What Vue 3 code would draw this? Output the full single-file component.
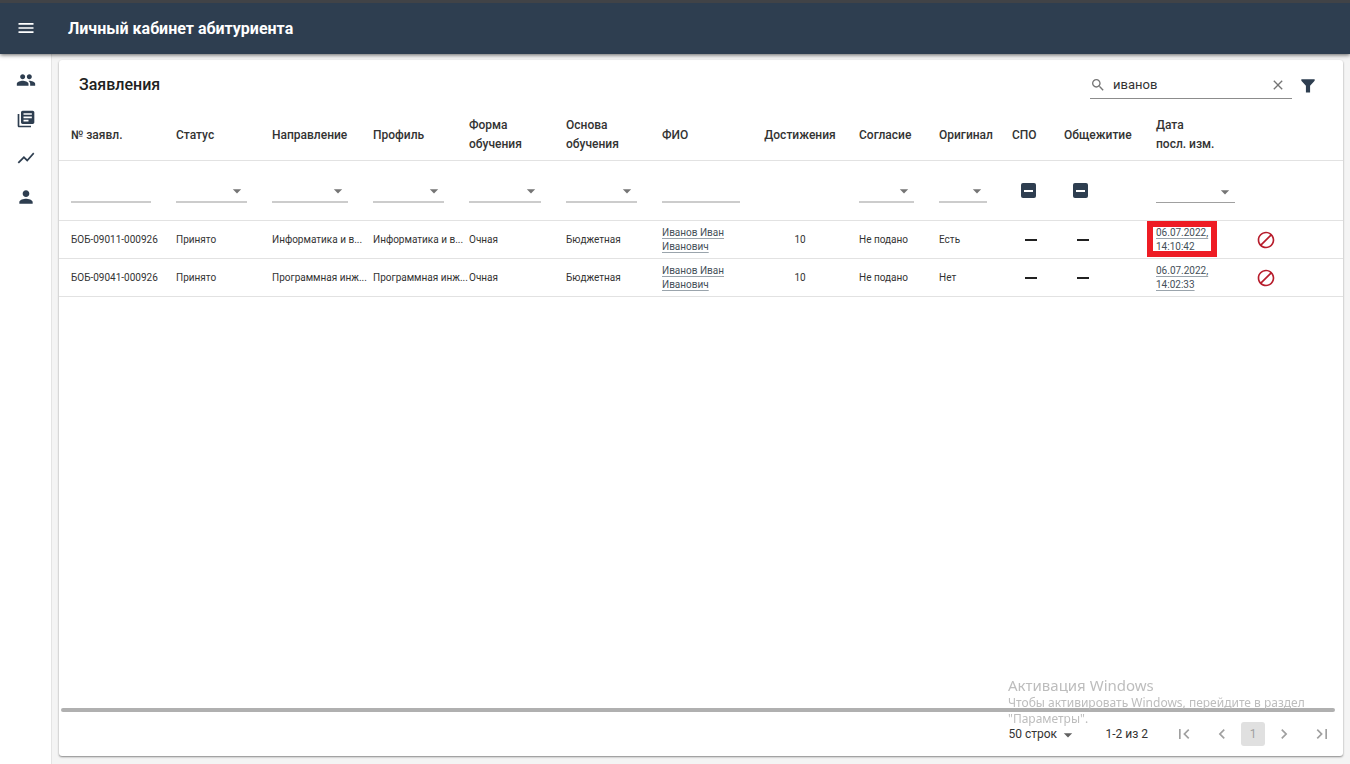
<script setup>
import { ref } from 'vue'

const search = ref('иванов')
const rowsPerPage = ref('50 строк')

const nav = [
  { label: 'Абитуриенты', path: 'M16 11c1.66 0 2.99-1.34 2.99-3S17.66 5 16 5s-3 1.34-3 3 1.34 3 3 3zm-8 0c1.66 0 2.99-1.34 2.99-3S9.66 5 8 5 5 6.34 5 8s1.34 3 3 3zm0 2c-2.33 0-7 1.17-7 3.5V19h14v-2.500c0-2.330-4.670-3.500-7-3.500zm8 0c-.29 0-.62.02-.97.05 1.160.84 1.970 1.970 1.970 3.450V19h6v-2.500c0-2.330-4.670-3.500-7-3.500z' },
  { label: 'Заявления', path: 'M4 6H2v14c0 1.100.9 2 2 2h14v-2H4V6zm16-4H8c-1.100 0-2 .9-2 2v12c0 1.100.9 2 2 2h12c1.100 0 2-.9 2-2V4c0-1.100-.9-2-2-2zm-1 9H9V9h10v2zm-4 4H9v-2h6v2zm4-8H9V5h10v2z' },
  { label: 'Статистика', path: 'M3.500 18.490l6-6.010 4 4L22 6.920l-1.410-1.410-7.090 7.970-4-4L2 16.990z' },
  { label: 'Профиль', path: 'M12 12c2.210 0 4-1.790 4-4s-1.790-4-4-4-4 1.790-4 4 1.790 4 4 4zm0 2c-2.670 0-8 1.340-8 4v2h16v-2c0-2.660-5.330-4-8-4z' },
]

const columns = [
  { key: 'number', lines: ['№ заявл.'], filter: 'text' },
  { key: 'status', lines: ['Статус'], filter: 'select' },
  { key: 'direction', lines: ['Направление'], filter: 'select' },
  { key: 'profile', lines: ['Профиль'], filter: 'select' },
  { key: 'form', lines: ['Форма', 'обучения'], filter: 'select' },
  { key: 'basis', lines: ['Основа', 'обучения'], filter: 'select' },
  { key: 'name', lines: ['ФИО'], filter: 'text' },
  { key: 'points', lines: ['Достижения'] },
  { key: 'consent', lines: ['Согласие'], filter: 'select' },
  { key: 'original', lines: ['Оригинал'], filter: 'select' },
  { key: 'spo', lines: ['СПО'], filter: 'check' },
  { key: 'dorm', lines: ['Общежитие'], filter: 'check' },
  { key: 'date', lines: ['Дата', 'посл. изм.'], filter: 'select' },
  { key: 'action', lines: [] },
]

const rows = [
  { number: 'БОБ-09011-000926', status: 'Принято', direction: 'Информатика и в...', profile: 'Информатика и в...', form: 'Очная', basis: 'Бюджетная', name: ['Иванов Иван', 'Иванович'], points: '10', consent: 'Не подано', original: 'Есть', date: ['06.07.2022,', '14:10:42'], marked: true },
  { number: 'БОБ-09041-000926', status: 'Принято', direction: 'Программная инж...', profile: 'Программная инж...', form: 'Очная', basis: 'Бюджетная', name: ['Иванов Иван', 'Иванович'], points: '10', consent: 'Не подано', original: 'Нет', date: ['06.07.2022,', '14:02:33'], marked: false },
]
</script>

<template>
  <div class="app">
    <header class="topbar">
      <button class="icon-btn menu" aria-label="Меню">
        <svg viewBox="0 0 24 24"><path d="M3 18h18v-2H3v2zm0-5h18v-2H3v2zm0-7v2h18V6H3z" /></svg>
      </button>
      <h1>Личный кабинет абитуриента</h1>
    </header>

    <div class="body">
      <nav class="sidebar">
        <a v-for="item in nav" :key="item.label" href="#" :aria-label="item.label">
          <svg viewBox="0 0 24 24"><path :d="item.path" /></svg>
        </a>
      </nav>

      <main class="content">
        <section class="card">
          <div class="toolbar">
            <h2>Заявления</h2>
            <div class="search">
              <svg viewBox="0 0 24 24"><path d="M15.500 14h-.79l-.28-.27C15.410 12.590 16 11.110 16 9.500 16 5.910 13.090 3 9.500 3S3 5.910 3 9.500 5.910 16 9.500 16c1.610 0 3.090-.59 4.230-1.570l.27.28v.79l5 4.990L20.490 19l-4.990-5zm-6 0C7.010 14 5 11.990 5 9.500S7.010 5 9.500 5 14 7.010 14 9.500 11.990 14 9.500 14z" /></svg>
              <input v-model="search" type="text" aria-label="Поиск" />
              <button class="icon-btn" aria-label="Очистить" @click="search = ''">
                <svg viewBox="0 0 24 24"><path d="M19 6.410L17.590 5 12 10.590 6.410 5 5 6.410 10.590 12 5 17.590 6.410 19 12 13.410 17.590 19 19 17.590 13.410 12z" /></svg>
              </button>
            </div>
            <button class="icon-btn funnel" aria-label="Фильтр">
              <svg viewBox="0 0 24 24"><path d="M4 5h16v2l-5.500 6V21h-5v-8L4 7z" /></svg>
            </button>
          </div>

          <div class="table-wrap">
            <table>
              <colgroup>
                <col v-for="c in columns" :key="c.key" :class="'w-' + c.key" />
              </colgroup>
              <thead>
                <tr class="heads">
                  <th v-for="c in columns" :key="c.key" :class="c.key">
                    <div v-for="line in c.lines" :key="line">{{ line }}</div>
                  </th>
                </tr>
                <tr class="filters">
                  <td v-for="c in columns" :key="c.key" :class="c.key">
                    <input v-if="c.filter === 'text'" class="field" type="text" :aria-label="c.lines.join(' ')" />
                    <div v-else-if="c.filter === 'select'" class="field pick">
                      <select :aria-label="c.lines.join(' ')"><option></option></select>
                      <svg viewBox="0 0 24 24"><path d="M7 10l5 5 5-5z" /></svg>
                    </div>
                    <input v-else-if="c.filter === 'check'" class="check" type="checkbox" :indeterminate="true" :aria-label="c.lines.join(' ')" />
                  </td>
                </tr>
              </thead>
              <tbody>
                <tr v-for="r in rows" :key="r.number">
                  <td>{{ r.number }}</td>
                  <td>{{ r.status }}</td>
                  <td>{{ r.direction }}</td>
                  <td>{{ r.profile }}</td>
                  <td>{{ r.form }}</td>
                  <td>{{ r.basis }}</td>
                  <td><a href="#" class="link">{{ r.name[0] }}<br />{{ r.name[1] }}</a></td>
                  <td class="points">{{ r.points }}</td>
                  <td>{{ r.consent }}</td>
                  <td>{{ r.original }}</td>
                  <td class="none"><i></i></td>
                  <td class="none"><i></i></td>
                  <td class="date">
                    <a href="#" class="link">{{ r.date[0] }}<br />{{ r.date[1] }}</a>
                    <span v-if="r.marked" class="mark"></span>
                  </td>
                  <td class="action">
                    <button class="icon-btn" aria-label="Отклонить">
                      <svg viewBox="0 0 24 24"><path d="M12 2C6.480 2 2 6.480 2 12s4.480 10 10 10 10-4.480 10-10S17.520 2 12 2zM4 12c0-4.420 3.580-8 8-8 1.850 0 3.550.63 4.900 1.690L5.690 16.900C4.630 15.550 4 13.850 4 12zm8 8c-1.850 0-3.550-.63-4.900-1.690L18.310 7.100C19.370 8.450 20 10.150 20 12c0 4.420-3.580 8-8 8z" /></svg>
                    </button>
                  </td>
                </tr>
              </tbody>
            </table>
          </div>

          <div class="scrollbar"></div>

          <footer class="pager">
            <div class="pick size">
              <select v-model="rowsPerPage" aria-label="Строк на странице"><option>50 строк</option></select>
              <svg viewBox="0 0 24 24"><path d="M7 10l5 5 5-5z" /></svg>
            </div>
            <span class="range">1-2 из 2</span>
            <div class="pages">
              <button class="icon-btn first" aria-label="Первая"><svg viewBox="0 0 24 24"><path d="M18.410 16.590L13.820 12l4.590-4.590L17 6l-6 6 6 6zM6 6h2v12H6z" /></svg></button>
              <button class="icon-btn" aria-label="Назад"><svg viewBox="0 0 24 24"><path d="M15.410 7.410L14 6l-6 6 6 6 1.410-1.410L10.830 12z" /></svg></button>
              <button class="page">1</button>
              <button class="icon-btn" aria-label="Вперёд"><svg viewBox="0 0 24 24"><path d="M10 6L8.590 7.410 13.170 12l-4.580 4.590L10 18l6-6z" /></svg></button>
              <button class="icon-btn last" aria-label="Последняя"><svg viewBox="0 0 24 24"><path d="M5.590 7.410L10.180 12l-4.590 4.590L7 18l6-6-6-6zM16 6h2v12h-2z" /></svg></button>
            </div>
          </footer>
        </section>
      </main>
    </div>

    <aside class="activation">
      <strong>Активация Windows</strong>
      <p>Чтобы активировать Windows, перейдите в раздел "Параметры".</p>
    </aside>
  </div>
</template>

<style>
body {
  margin: 0;
  background: #f4f4f4;
}
</style>

<style scoped>
* {
  box-sizing: border-box;
}

.app {
  display: flex;
  flex-direction: column;
  min-height: 100vh;
  background: #f4f4f4;
  color: #212121;
  font-family: Roboto, "Liberation Sans", sans-serif;
}

svg {
  display: block;
  width: 20px;
  height: 20px;
  fill: currentColor;
}

button,
input,
select {
  margin: 0;
  padding: 0;
  border: 0;
  outline: 0;
  background: none;
  color: inherit;
  font: inherit;
  appearance: none;
}

.icon-btn {
  display: flex;
  flex: none;
  align-items: center;
  justify-content: center;
}

.topbar {
  position: relative;
  z-index: 2;
  display: flex;
  align-items: center;
  gap: 32px;
  height: 54px;
  padding: 0 16px 1px;
  border-top: 3px solid #414347;
  background: #2e3e50;
  color: #fff;
  box-shadow: 0 1px 4px rgba(0, 0, 0, 0.6);
}

.topbar h1 {
  margin: 0;
  font-size: 16px;
  font-weight: 700;
}

.body {
  display: flex;
  flex: 1;
}

.sidebar {
  display: flex;
  flex: none;
  flex-direction: column;
  gap: 19px;
  width: 52px;
  padding: 16px;
  border-right: 1px solid #e4e4e4;
  background: #fff;
}

.sidebar a {
  color: #2e3e50;
}

.content {
  display: flex;
  flex: 1;
  min-width: 0;
  padding: 6px 7px 8px;
}

.card {
  display: flex;
  flex: 1;
  flex-direction: column;
  min-width: 0;
  border-radius: 3px;
  background: #fff;
  box-shadow: 0 1px 2px rgba(0, 0, 0, 0.45);
}

.toolbar {
  display: flex;
  align-items: center;
  height: 50px;
  padding: 0 25px 0 20px;
}

.toolbar h2 {
  flex: 1;
  margin: 0;
  font-size: 16px;
  font-weight: 500;
  line-height: 20px;
}

.search {
  display: flex;
  align-items: center;
  width: 202px;
  height: 28px;
  border-bottom: 1px solid #8c8c8c;
  color: #757575;
}

.search svg {
  width: 16px;
  height: 16px;
}

.search input {
  flex: 1;
  min-width: 0;
  margin-left: 7px;
  color: #333;
  font-size: 13px;
}

.search .icon-btn {
  margin-right: 6px;
}

.funnel {
  margin-left: 6px;
  color: #2e3e50;
}

.table-wrap {
  flex: 1;
  overflow: hidden;
}

table {
  width: 100%;
  border-spacing: 0;
  table-layout: fixed;
}

.w-number { width: 105px; }
.w-status { width: 96px; }
.w-direction { width: 101px; }
.w-profile { width: 96px; }
.w-form { width: 97px; }
.w-basis { width: 96px; }
.w-name { width: 103px; }
.w-points { width: 94px; }
.w-consent { width: 80px; }
.w-original { width: 73px; }
.w-spo { width: 52px; }
.w-dorm { width: 92px; }
.w-date { width: 104px; }
.w-action { width: 95px; }

th,
td {
  padding: 0 0 0 12px;
  border-bottom: 1px solid #e2e2e2;
  text-align: left;
  vertical-align: middle;
  white-space: nowrap;
}

th {
  height: 51px;
  color: #333;
  font-size: 12px;
  font-weight: 500;
  line-height: 19px;
}

th.points,
td.points {
  padding: 0;
  text-align: center;
}

.filters td {
  height: 60px;
  padding-right: 13px;
}

tbody td {
  height: 38px;
  color: #333;
  font-size: 10px;
  line-height: 14px;
}

.field {
  display: block;
  width: 100%;
  height: 25px;
  border-bottom: 2px solid #ccc;
}

.date .field {
  height: 24px;
  border-bottom: 1px solid #a0a0a0;
}

.pick {
  display: flex;
  position: relative;
  color: #757575;
}

.pick select {
  width: 100%;
}

.pick svg {
  position: absolute;
  right: 0;
  bottom: 0;
  pointer-events: none;
}

.filters .spo,
.filters .dorm {
  padding: 0 0 0 21px;
}

.check {
  display: grid;
  place-items: center;
  width: 15px;
  height: 15px;
  border-radius: 2px;
  background: #2e3e50;
}

.check::after {
  content: "";
  width: 9px;
  height: 2px;
  background: #fff;
}

.link {
  color: #455059;
  text-decoration: underline;
  text-decoration-color: #9aa4ac;
  text-underline-offset: 2px;
}

.none {
  padding-left: 25px;
}

.none i {
  display: block;
  width: 12px;
  height: 2px;
  background: #212121;
}

td.date {
  position: relative;
}

.mark {
  position: absolute;
  top: 0;
  left: 3px;
  width: 70px;
  height: 36px;
  border: 6px solid #ee1c24;
}

.action {
  padding-left: 8px;
}

.action .icon-btn {
  color: #b71c2b;
}

.scrollbar {
  height: 4px;
  margin: 0 8px 0 2px;
  border-radius: 2px;
  background: #b0b0b0;
}

.pager {
  display: flex;
  align-items: center;
  justify-content: flex-end;
  height: 44px;
  padding-right: 11px;
  color: #333;
  font-size: 12px;
}

.size {
  align-items: center;
  width: 70px;
  color: #333;
}

.size svg {
  bottom: -4px;
  color: #616161;
}

.range {
  margin-left: 27px;
}

.pages {
  display: flex;
  align-items: center;
  gap: 9px;
  margin-left: 26px;
  color: #a0a0a0;
}

.first {
  margin-right: 9px;
}

.last {
  margin-left: 9px;
}

.page {
  width: 24px;
  height: 24px;
  border-radius: 3px;
  background: #e0e0e0;
  text-align: center;
}

.activation {
  position: fixed;
  z-index: 3;
  right: 42px;
  bottom: 37px;
  width: 300px;
  color: #bdbdbd;
  font-family: "Noto Sans", "Open Sans", sans-serif;
  font-size: 12px;
  line-height: 16px;
  pointer-events: none;
}

.activation strong {
  display: block;
  font-size: 15px;
  font-weight: 400;
  line-height: 20px;
}

.activation p {
  margin: 0;
}
</style>
